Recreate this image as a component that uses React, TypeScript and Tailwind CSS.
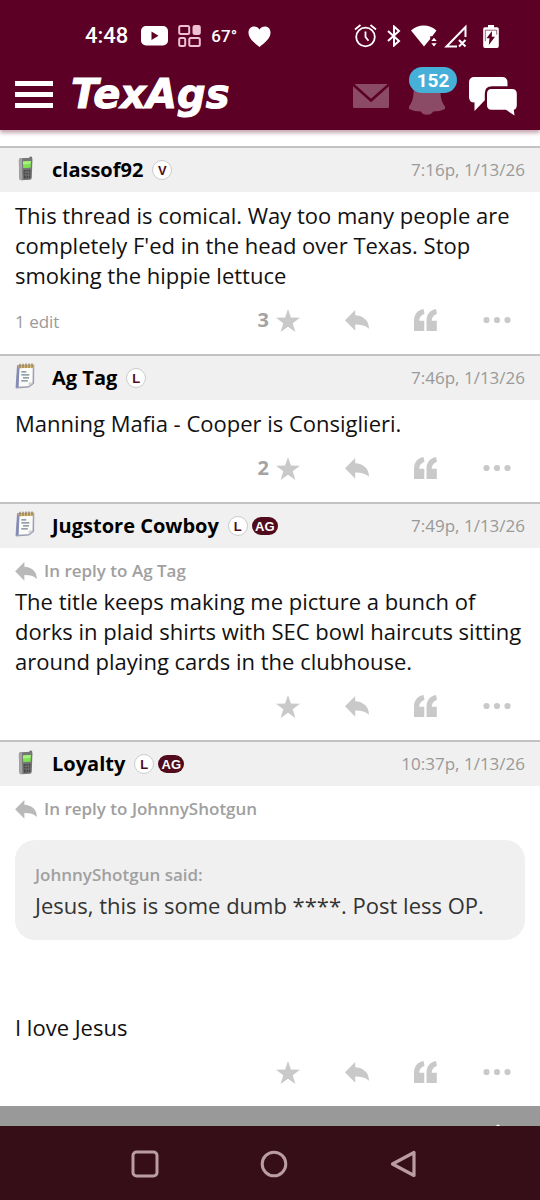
import React from "react";

type Badge = "V" | "L" | "AG";

interface Post {
  author: string;
  device: "phone" | "notepad";
  badges: Badge[];
  time: string;
  replyTo?: string;
  quote?: { author: string; text: string };
  body: string;
  edits?: string;
  stars?: number;
}

const posts: Post[] = [
  {
    author: "classof92",
    device: "phone",
    badges: ["V"],
    time: "7:16p, 1/13/26",
    body: "This thread is comical. Way too many people are completely F'ed in the head over Texas. Stop smoking the hippie lettuce",
    edits: "1 edit",
    stars: 3,
  },
  {
    author: "Ag Tag",
    device: "notepad",
    badges: ["L"],
    time: "7:46p, 1/13/26",
    body: "Manning Mafia - Cooper is Consiglieri.",
    stars: 2,
  },
  {
    author: "Jugstore Cowboy",
    device: "notepad",
    badges: ["L", "AG"],
    time: "7:49p, 1/13/26",
    replyTo: "Ag Tag",
    body: "The title keeps making me picture a bunch of dorks in plaid shirts with SEC bowl haircuts sitting around playing cards in the clubhouse.",
  },
  {
    author: "Loyalty",
    device: "phone",
    badges: ["L", "AG"],
    time: "10:37p, 1/13/26",
    replyTo: "JohnnyShotgun",
    quote: { author: "JohnnyShotgun", text: "Jesus, this is some dumb ****. Post less OP." },
    body: "I love Jesus",
  },
];

function ReplyIcon({ className }: { className: string }) {
  return (
    <svg viewBox="0 0 24 21" className={className} fill="currentColor" aria-hidden="true">
      <path d="M0 10.2 10.2 0v5.2C18 5.6 24 10 24 18.8c-3.600-3.300-8-4.400-13.800-4.300v6.200z" />
    </svg>
  );
}

function StarIcon() {
  return (
    <svg viewBox="0 0 24 23" className="h-[23px] w-6" fill="currentColor" aria-hidden="true">
      <path d="M12 0 14.900 8.500 24 8.700 16.700 14.200 19.400 23 12 17.700 4.600 23 7.300 14.200 0 8.700 9.100 8.500z" />
    </svg>
  );
}

function QuoteIcon() {
  return (
    <svg viewBox="0 0 24 22" className="h-[22px] w-6" fill="currentColor" aria-hidden="true">
      <path d="M9.500 0C3.300 1.200 0 5.500 0 12v10h10.300V11.800H5.200c0-3.400 1.900-5.700 5.300-7z" />
      <path d="M22 0c-6.200 1.200-9.500 5.500-9.500 12v10h10.300V11.800h-5.100c0-3.400 1.900-5.700 5.300-7z" />
    </svg>
  );
}

function DotsIcon() {
  return (
    <svg viewBox="0 0 28 8" className="h-2 w-7" fill="currentColor" aria-hidden="true">
      <circle cx="3.500" cy="4" r="3.100" />
      <circle cx="14" cy="4" r="3.100" />
      <circle cx="24.500" cy="4" r="3.100" />
    </svg>
  );
}

function PhoneIcon() {
  return (
    <svg viewBox="0 0 16 25" className="mb-[3px] ml-[3px] h-[25px] w-4" aria-hidden="true">
      <path d="M11.500 1.500Q11.500.5 12.800.5t1.300 1V6h-2.600z" fill="#6e6e6e" />
      <path d="M2.500 2.200 13 1.800q1.500 0 1.400 1.600l-.6 18.200q-.1 2-1.600 2.100l-9 .5q-1.700 0-1.900-1.800L.8 4.200q0-1.900 1.700-2z" fill="#767676" />
      <path d="M1 4.200q0-1.900 1.600-2h1.300l.5 21.900-1.200.1q-1.700 0-1.900-1.800z" fill="#a5a5a5" />
      <path d="M5 5.500 12.800 5l-.2 6.800-7.400.3z" fill="#7ee552" />
      <path d="M5 5.500 12.800 5l-.1 2.600L5 8.600z" fill="#a6f37f" />
      <path d="m5.600 14 6.800-.3-.3 8.300-6.200.4z" fill="#444" />
      <path d="M6 16.200h6M6 19h6M8 14v8M10.300 14v8" stroke="#858585" strokeWidth=".7" />
    </svg>
  );
}

function NotepadIcon() {
  return (
    <svg viewBox="0 0 20 26" className="mb-[5px] h-[26px] w-5" aria-hidden="true">
      <path d="M2.500 2.500 18.800 2l-.2 18.500L14 24 1 25z" fill="#b9bdca" stroke="#858aa0" strokeWidth=".8" />
      <path d="M4.200 3.500 17.700 3l-.4 16.400-3.600 3.600-10.200.6z" fill="#fbfbf8" />
      <path d="M2.500 3 1 24.500l2.500-.5L4.500 4z" fill="#8289bb" />
      <path d="M13.700 23v-3.400l3.600-.2z" fill="#cfd0d4" />
      <path d="M3.500 2.700 18.300 2v2.800l-14.600.5z" fill="#d9bd76" />
      <path d="M5 .8v4.400M8 .7v4.400M11 .6V5M14 .5V5M17 .4v4.400" stroke="#94794a" strokeWidth="1.200" />
      <path d="M6.300 8.800h5M6.300 11.800h8M8 14.800h6M6.300 17.800h6.500" stroke="#6f8290" strokeWidth="1.300" />
    </svg>
  );
}

function UserBadge({ badge }: { badge: Badge }) {
  if (badge === "AG") {
    return (
      <span className="flex h-[18px] w-[26px] items-center justify-center rounded-full bg-[#500c1c] font-['Liberation_Sans',sans-serif] text-[13px] leading-none font-bold text-white">
        AG
      </span>
    );
  }
  return (
    <span className="flex size-5 items-center justify-center rounded-full border border-[#ccc] bg-white font-['Liberation_Sans',sans-serif] text-[13px] leading-none font-bold text-[#500c1c]">
      {badge}
    </span>
  );
}

function StatusBar() {
  return (
    <div className="flex h-6 items-center justify-between pr-[41px] pl-[85px] font-[Roboto,sans-serif] text-white">
      <div className="flex items-center">
        <span className="text-[22px] leading-6 font-medium">4:48</span>
        <svg viewBox="0 0 27 20" className="ml-[13px] h-5 w-[27px]" aria-hidden="true">
          <rect width="27" height="19.500" rx="5" fill="#fff" />
          <path d="m10.500 5.500 7 4.200-7 4.200z" fill="#5c0025" />
        </svg>
        <svg viewBox="0 0 23 22" className="ml-[10px] h-[22px] w-[23px]" fill="none" stroke="#efc0d2" strokeWidth="2" aria-hidden="true">
          <rect x="1.200" y="1" width="10" height="8" rx="1.500" />
          <rect x="15.500" y="1" width="6.300" height="8" rx="1.500" fill="#efc0d2" />
          <rect x="1.200" y="13" width="6" height="8" rx="1.500" />
          <rect x="11.300" y="13" width="10.500" height="8" rx="1.500" />
        </svg>
        <span className="ml-[10px] text-[17px] leading-6 font-medium">67°</span>
        <svg viewBox="0 0 23 21" className="ml-[11px] h-[21px] w-[23px]" fill="#fff" aria-hidden="true">
          <path d="M11.500 21C6 16.500.5 12.500.5 6.500.5 2.800 3 .5 6 .5c2.500 0 4.300 1.200 5.500 3C12.700 1.700 14.500.5 17 .5c3 0 5.500 2.300 5.500 6 0 6-5.500 10-11 14.500z" />
        </svg>
      </div>
      <div className="flex items-center">
        <svg viewBox="0 0 23 24" className="h-6 w-[23px]" fill="none" stroke="#fff" strokeWidth="1.800" aria-hidden="true">
          <circle cx="11.500" cy="13" r="9.300" />
          <path d="M11.500 7.500V13l3 3.800M1 5.500 6.500 1M22 5.500 16.500 1" />
        </svg>
        <svg viewBox="0 0 14 22" className="ml-[10px] h-[22px] w-[14px]" fill="none" stroke="#fff" strokeWidth="2" aria-hidden="true">
          <path d="m1 6 11 10-5 4.500V1.500L12 6 1 16" />
        </svg>
        <svg viewBox="0 0 27 22" className="ml-[10px] h-[22px] w-[27px]" fill="#fff" aria-hidden="true">
          <path d="M0 5.500C7.500-1.200 18-1.200 25.500 5.500l-4.300 5.700h-2v2.900L13 21.500z" />
          <path d="m23 12.800 2.700 3.200h-5.400zM23 21.500l2.700-3.200h-5.400z" />
        </svg>
        <svg viewBox="0 0 24 24" className="ml-[6px] size-6" fill="none" stroke="#fff" strokeWidth="2" aria-hidden="true">
          <path d="M13 22.500H2.500L21.500 3v10M15 16l6.500 6.500M21.500 16 15 22.500" />
        </svg>
        <svg viewBox="0 0 16 23" className="ml-[15px] h-[23px] w-4" aria-hidden="true">
          <path d="M5 0h6v2.200h3q1.800 0 1.800 1.800v17q0 2-1.800 2H2q-1.800 0-1.800-2V4Q.2 2.200 2 2.200h3z" fill="#fff" />
          <path d="m9 6-5.500 7.200h3L5.800 20l6.200-8.200H8.800z" fill="#5c0025" />
          <path d="M2.300 5.200h11.400v4.500M2.300 5.200v11" fill="none" stroke="#5c0025" strokeWidth=".6" />
        </svg>
      </div>
    </div>
  );
}

function TopNav() {
  return (
    <div className="flex items-center justify-between pr-[23px] pl-[15px]">
      <div className="flex items-center gap-[18px] pb-1">
        <button type="button" aria-label="Menu" className="flex w-[38px] flex-col gap-[6px]">
          <span className="h-[5px] bg-white" />
          <span className="h-[5px] bg-white" />
          <span className="h-[5px] bg-white" />
        </button>
        <a
          href="#"
          className="font-['DejaVu_Sans',sans-serif] text-[40px] leading-[48px] font-bold text-white italic [-webkit-text-stroke:1px_white]"
        >
          TexAgs
        </a>
      </div>
      <div className="flex items-center">
        <button type="button" aria-label="Messages" className="text-[#8b4b66]">
          <svg viewBox="0 0 36 24" className="h-6 w-9">
            <rect width="36" height="24" rx="1.500" fill="currentColor" />
            <path d="M0 .5 18 16.500 36 .5" fill="none" stroke="#5c0025" strokeWidth="2.600" />
          </svg>
        </button>
        <button type="button" aria-label="152 notifications" className="relative ml-5 text-[#8b4b66]">
          <svg viewBox="0 0 36 38" className="h-[38px] w-9" fill="currentColor">
            <path d="M18 0c2 0 3 1.200 3 3.200C28 5 31 9 31.500 16c.3 6 1.500 9.500 4.500 13.500v2.500q-5 2.500-12 2.500-1.500 3.200-6 3.200t-6-3.200q-7 0-12-2.500v-2.500C3 25.500 4.200 22 4.500 16 5 9 8 5 15 3.200 15 1.200 16 0 18 0z" />
          </svg>
          <span className="absolute -top-[10px] left-0 flex h-[26px] w-12 items-center justify-center rounded-full bg-[#46b0d8] font-[Roboto,sans-serif] text-[19px] leading-none font-bold text-white">
            152
          </span>
        </button>
        <button type="button" aria-label="Forums" className="ml-6 text-white">
          <svg viewBox="0 0 48 39" className="h-[39px] w-12" fill="currentColor">
            <path d="M5.500 0H33q5.500 0 5.500 5.500v3.700H23q-7.200 0-7.200 7.200v6.800L5.500 34V25.500Q0 25.500 0 20V5.500Q0 0 5.500 0z" />
            <path d="M22.500 12H43q4.800 0 4.800 4.800V28q0 4-3 4.800L45.500 38.500 37 32.800H22.500q-4.500 0-4.500-4.800V16.800q0-4.800 4.500-4.800z" />
          </svg>
        </button>
      </div>
    </div>
  );
}

function PostCard({ post }: { post: Post }) {
  return (
    <article className="border-t-2 border-[#c2c2c2]">
      <header className="flex h-11 items-center bg-[#f0f0f0] px-[15px]">
        <div className="flex w-[37px] shrink-0 items-center">
          {post.device === "phone" ? <PhoneIcon /> : <NotepadIcon />}
        </div>
        <a href="#" className="text-[20px] leading-[30px] font-bold text-black">
          {post.author}
        </a>
        <div className="ml-[9px] flex items-center gap-1">
          {post.badges.map((badge) => (
            <UserBadge key={badge} badge={badge} />
          ))}
        </div>
        <time className="ml-auto text-[17px] text-[#999]">{post.time}</time>
      </header>

      <div className="px-[15px] pt-2">
        {post.replyTo && (
          <a href="#" className="flex h-[30px] items-center gap-[7px] text-[17px] font-semibold text-[#a0a0a0]">
            <ReplyIcon className="h-[19px] w-[22px] text-[#b9b9b9]" />
            In reply to {post.replyTo}
          </a>
        )}
        {post.quote && (
          <blockquote className="mt-4 mb-[72px] rounded-[20px] bg-[#f0f0f0] p-5 leading-[30px]">
            <div className="text-[17px] font-semibold text-[#a0a0a0]">{post.quote.author} said:</div>
            <p className="text-[22px] text-[#333]">{post.quote.text}</p>
          </blockquote>
        )}
        <p className="text-[22px] leading-[30px] text-[#111]">{post.body}</p>
      </div>

      <footer className="mb-1 flex h-[60px] items-center pr-[29px] pl-[15px] text-[#c9c9c9]">
        {post.edits && <span className="pt-1 text-[17px] text-[#999]">{post.edits}</span>}
        <div className="ml-auto flex items-center gap-[45px]">
          <button type="button" aria-label="Star" className="flex items-center gap-[7px]">
            {post.stars && <span className="text-[20px] leading-6 font-bold text-[#a3a3a3]">{post.stars}</span>}
            <StarIcon />
          </button>
          <button type="button" aria-label="Reply">
            <ReplyIcon className="h-[21px] w-6" />
          </button>
          <button type="button" aria-label="Quote">
            <QuoteIcon />
          </button>
          <button type="button" aria-label="More">
            <DotsIcon />
          </button>
        </div>
      </footer>
    </article>
  );
}

export default function App() {
  return (
    <div className="min-h-screen bg-white font-['Open_Sans',sans-serif]">
      <div className="bg-[#5c0025] pt-6 pb-2 shadow-[0_3px_4px_rgba(92,0,37,0.35)]">
        <StatusBar />
        <div className="pt-[22px]">
          <TopNav />
        </div>
      </div>

      <main className="pt-4">
        {posts.map((post) => (
          <PostCard key={post.author} post={post} />
        ))}
      </main>

      <div className="flex h-5 items-end justify-end bg-[#999] pr-10">
        <svg viewBox="0 0 4 2" className="h-[2px] w-1" fill="#fff" aria-hidden="true">
          <path d="M0 2Q2-1 4 2z" />
        </svg>
      </div>

      <nav className="flex items-center justify-around bg-[#360e17] pt-6 pr-[73px] pb-[23px] pl-[81px] text-[#b99ca4]">
        <button type="button" aria-label="Recent apps">
          <svg viewBox="0 0 28 28" className="size-7" fill="none" stroke="currentColor" strokeWidth="3">
            <rect x="2" y="2" width="24" height="24" rx="3.500" />
          </svg>
        </button>
        <button type="button" aria-label="Home">
          <svg viewBox="0 0 28 28" className="size-7" fill="none" stroke="currentColor" strokeWidth="3">
            <circle cx="14" cy="14" r="11.800" />
          </svg>
        </button>
        <button type="button" aria-label="Back">
          <svg viewBox="0 0 28 28" className="size-7" fill="none" stroke="currentColor" strokeWidth="3.200" strokeLinejoin="round">
            <path d="M25 2.500v23L3.500 14z" />
          </svg>
        </button>
      </nav>
    </div>
  );
}
